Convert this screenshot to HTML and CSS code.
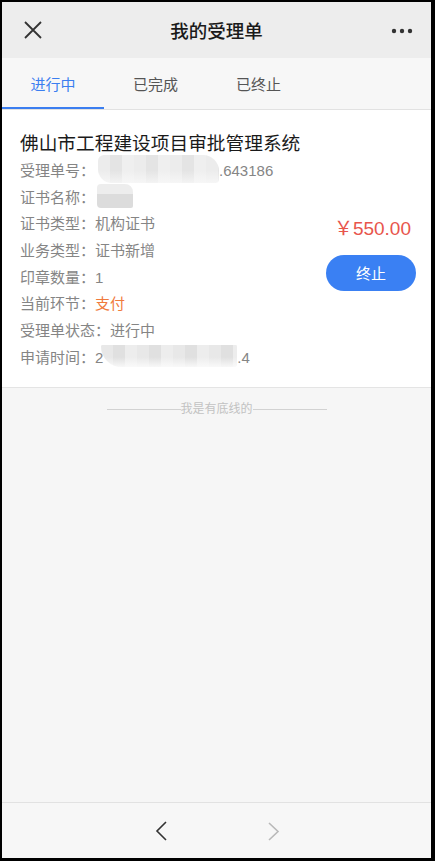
FILE: index.html
```html
<!DOCTYPE html>
<html>
	<head>
		<meta charset="UTF-8">
		<title>我的受理单</title>
		<link rel="stylesheet" href="styles.css">
	</head>
	<body>
		<div class="phone">
			<div class="topbar">
				<svg class="close" width="18" height="18" viewBox="0 0 18 18"><path d="M1 1L17 17M17 1L1 17" stroke="#333" stroke-width="1.8" fill="none"/></svg>
				<span class="topbar-title">我的受理单</span>
				<svg class="more" width="22" height="6" viewBox="0 0 22 6"><circle cx="3" cy="3" r="2.2" fill="#333"/><circle cx="11" cy="3" r="2.2" fill="#333"/><circle cx="19" cy="3" r="2.2" fill="#333"/></svg>
			</div>
			<div class="tabs">
				<div class="tab active">进行中</div>
				<div class="tab">已完成</div>
				<div class="tab">已终止</div>
			</div>
			<div class="main">
				<div class="card">
					<div class="card-info">
						<div class="card-title">佛山市工程建设项目审批管理系统</div>
						<div class="row">受理单号：<span class="mosaic mosaic-long"></span>.643186</div>
						<div class="row">证书名称：<span class="mosaic mosaic-short"></span></div>
						<div class="row">证书类型：机构证书</div>
						<div class="row">业务类型：证书新增</div>
						<div class="row">印章数量：1</div>
						<div class="row">当前环节：<span class="step">支付</span></div>
						<div class="row">受理单状态：进行中</div>
						<div class="row">申请时间：2<span class="mosaic mosaic-date"></span>.4</div>
					</div>
					<div class="card-side">
						<div class="price">￥550.00</div>
						<button class="btn-stop">终止</button>
					</div>
				</div>
				<div class="bottom-line"><span>我是有底线的</span></div>
			</div>
			<div class="navbar">
				<svg width="12" height="20" viewBox="0 0 12 20"><path d="M11 1L2 10L11 19" stroke="#333" stroke-width="1.6" fill="none"/></svg>
				<svg width="12" height="20" viewBox="0 0 12 20"><path d="M1 2L10 10.5L1 19" stroke="#b9b9b9" stroke-width="1.6" fill="none"/></svg>
			</div>
		</div>
	</body>
</html>
```

FILE: styles.css
```css
html, body {
	margin: 0;
	padding: 0;
	background: #000;
}
body {
	font-family: "Liberation Sans", "Noto Sans CJK SC", sans-serif;
}
.phone {
	margin: 2px 4px 3px 2px;
	height: 856px;
	background: #f6f6f6;
	display: flex;
	flex-direction: column;
}
.topbar {
	height: 56px;
	background: #ededed;
	display: flex;
	align-items: center;
	justify-content: space-between;
	padding: 0 18px 0 22px;
}
.topbar-title {
	font-size: 18.5px;
	font-weight: 500;
	color: #1a1a1a;
}
.more {
	margin-top: 1px;
}
.tabs {
	height: 51px;
	background: #f7f7f7;
	border-bottom: 1px solid #e2e2e2;
	display: flex;
}
.tab {
	width: 103px;
	box-sizing: border-box;
	border-bottom: 2px solid transparent;
	font-size: 15px;
	color: #555;
	display: flex;
	align-items: center;
	justify-content: center;
	padding-top: 2px;
}
.tab:first-child {
	width: 102px;
}
.tab.active {
	color: #3b7ef0;
	border-bottom-color: #3b7ef0;
}
.main {
	flex: 1;
}
.card {
	background: #fff;
	border-bottom: 1px solid #e4e4e4;
	display: flex;
	justify-content: space-between;
	padding: 20px 15px 15px 18px;
}
.card-title {
	font-size: 18.7px;
	line-height: 28px;
	color: #1a1a1a;
}
.row {
	font-size: 15px;
	line-height: 26.7px;
	height: 26.7px;
	color: #858585;
	white-space: nowrap;
}
.step {
	color: #f07a3c;
}
.mosaic {
	display: inline-block;
	vertical-align: middle;
	margin-top: -6px;
}
.mosaic-long {
	width: 121px;
	height: 28px;
	margin-left: 3px;
	border-radius: 6px 16px 4px 14px;
	background:
		linear-gradient(180deg, rgba(255,255,255,0) 55%, rgba(250,250,250,0.7) 100%),
		repeating-linear-gradient(90deg, #ececec 0 12px, #e4e4e4 12px 24px, #efefef 24px 36px);
}
.mosaic-short {
	width: 36px;
	height: 24px;
	margin-left: 2px;
	border-radius: 4px 8px 2px 4px;
	background:
		linear-gradient(180deg, #ededed 0 40%, #dcdcdc 40% 100%);
}
.mosaic-date {
	width: 136px;
	height: 22px;
	margin-left: -2px;
	border-radius: 2px 2px 4px 30px;
	background:
		linear-gradient(180deg, rgba(255,255,255,0) 55%, rgba(252,252,252,0.85) 100%),
		repeating-linear-gradient(90deg, #e8e8e8 0 12px, #e0e0e0 12px 24px, #ededed 24px 36px);
}
.card-side {
	display: flex;
	flex-direction: column;
	align-items: flex-end;
	align-self: center;
	margin-top: 6px;
}
.price {
	font-size: 19px;
	line-height: 24px;
	color: #e8554c;
	margin-right: 5px;
}
.btn-stop {
	margin-top: 14px;
	width: 90px;
	height: 36px;
	border: none;
	outline: none;
	border-radius: 18px;
	background: #3a80f3;
	color: #fff;
	font: 15px "Liberation Sans", "Noto Sans CJK SC", sans-serif;
}
.bottom-line {
	margin: 13px auto 0;
	width: 220px;
	display: flex;
	align-items: center;
	font-size: 12px;
	line-height: 17px;
	color: #c2c2c2;
}
.bottom-line::before, .bottom-line::after {
	content: "";
	flex: 1;
	height: 1px;
	background: #d2d2d2;
}
.navbar {
	height: 55px;
	border-top: 1px solid #e2e2e2;
	background: #f7f7f7;
	display: flex;
	align-items: center;
	justify-content: center;
	gap: 101px;
	padding-left: 2px;
}
```
